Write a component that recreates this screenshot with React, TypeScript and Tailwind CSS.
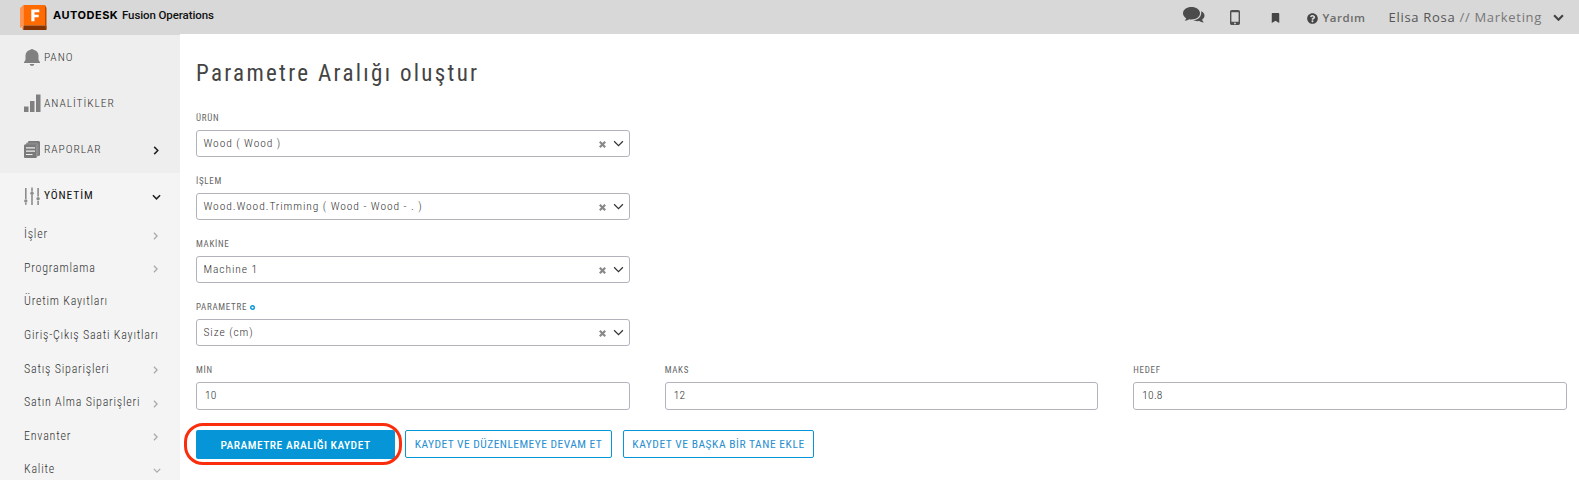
import type { ReactNode } from "react";
import { FaBookmark, FaQuestionCircle } from "react-icons/fa";

const FONT = "font-['Roboto',sans-serif] [font-stretch:75%]";

function Chevron({ className, dir, stroke = 1.7 }: { className: string; dir: "right" | "down"; stroke?: number }) {
  return dir === "right" ? (
    <svg viewBox="0 0 6 10" className={className} fill="none" stroke="currentColor" strokeWidth={stroke}>
      <path d="M1 1l4 4-4 4" />
    </svg>
  ) : (
    <svg viewBox="0 0 10 6" className={className} fill="none" stroke="currentColor" strokeWidth={stroke}>
      <path d="M1 1l4 4 4-4" />
    </svg>
  );
}

function Logo() {
  return (
    <svg viewBox="0 0 27 25" className="h-[25px] w-[27px]">
      <path d="M0 3l3.500-3v20.500l-3 2.500L0 22z" fill="#ff9350" />
      <path d="M3.500 0H25v20.500H3.500z" fill="#ff6b00" />
      <path d="M3.500 20.500H25L26.500 21v4H3L2.500 23z" fill="#843300" />
      <path d="M25 0l1.500 3v21L25 21z" fill="#b84a00" />
      <path d="M2.500 20.800l1-.8V25L2.500 24z" fill="#ff9350" />
      <path d="M11.300 4.500h8v2.700h-4.800v2.600h4.200v2.500h-4.200v4h-3.200z" fill="#fff" />
    </svg>
  );
}

function BellIcon() {
  return (
    <svg viewBox="0 0 16 17" className="h-[17px] w-4" fill="#808080">
      <path d="M8 0c.8 0 1.300.4 1.500.8 3 .6 5 2.700 5 5.700V10c0 1.200.5 2 1.500 3.200v.9H0v-.9C1 12 1.500 11.200 1.500 10V6.500c0-3 2-5.100 5-5.700C6.700.4 7.200 0 8 0z" />
      <path d="M5.700 15h4.600c-.3 1.200-1.200 1.900-2.300 1.900S6 16.200 5.700 15z" />
    </svg>
  );
}

function BarsIcon() {
  return (
    <svg viewBox="0 0 17 18" className="h-[18px] w-[17px]" fill="#808080">
      <path d="M0 12.500h4.500V18H0zM6 7h4.500v11H6zM12 .5h4.500V18H12z" />
    </svg>
  );
}

function ReportsIcon() {
  return (
    <svg viewBox="0 0 16 17" className="h-[17px] w-4">
      <path d="M4.500 0H15l1 1v13.500l-2.500.5V3H3.200z" fill="#7a7a7a" />
      <path d="M2.500 1.800H13l1.500 1.200v12l-1.500.5V4H1.500z" fill="#8c8c8c" />
      <rect y="3.500" width="12.800" height="13.500" rx="1" fill="#7a7a7a" />
      <path d="M2 6.800h9M2 10.200h9M2 13.500h6.500" stroke="#eee" strokeWidth="1.200" />
    </svg>
  );
}

function SlidersIcon() {
  return (
    <svg viewBox="0 0 16 18" className="h-[18px] w-4" fill="#8c8c8c">
      <path d="M1 1h1.600v11H1zM1 16h1.600v1.800H1zM7.200.5h1.600v4H7.200zM7.200 8h1.600v10H7.200zM13.300 1h1.600v8.500h-1.600zM13.300 14h1.600v4h-1.600z" />
      <circle cx="1.800" cy="14" r="1.700" />
      <circle cx="8" cy="6.200" r="1.700" />
      <circle cx="14.100" cy="11.800" r="1.700" />
    </svg>
  );
}

function ChatIcon() {
  return (
    <svg viewBox="0 0 22 17" className="h-[17px] w-[22px]" fill="#4c4c4c">
      <path d="M8.500 0C13.200 0 17 2.700 17 6.200s-3.800 6.200-8.500 6.200c-.8 0-1.500-.1-2.200-.2-1.200.9-2.700 1.400-4.600 1.500.7-.7 1.300-1.500 1.500-2.500C1.200 10 0 8.200 0 6.200 0 2.700 3.800 0 8.500 0z" />
      <path d="M18.200 4.300c2 .9 3.300 2.500 3.300 4.300 0 1.600-.9 3-2.400 4 .3 1 .8 2 1.700 2.900-1.900-.1-3.400-.6-4.500-1.500-2.300.4-4.600 0-6.200-.9 5 0 8.700-3.300 8.100-8.800z" />
    </svg>
  );
}

function PhoneIcon() {
  return (
    <svg viewBox="0 0 10 15" className="h-[15px] w-2.5">
      <path
        fillRule="evenodd"
        d="M1.800 0h6.400C9.200 0 10 .8 10 1.800v11.400c0 1-.8 1.800-1.800 1.800H1.800C.8 15 0 14.200 0 13.200V1.800C0 .8.800 0 1.800 0zM1.400 2.200v9.600h7.200V2.200zM5 12.500a.9.9 0 100 1.800.9.9 0 000-1.800z"
        fill="#505050"
      />
    </svg>
  );
}

function Header() {
  return (
    <header className="flex h-[35px] items-start bg-[#d8d8d8] pl-5">
      <div className="mt-[5px]">
        <Logo />
      </div>
      <div className="mt-[8px] ml-[6px] w-[65px] font-['Inter',sans-serif] text-[11px] leading-[15px] font-bold tracking-[0.5px] text-black">
        AUTODESK
      </div>
      <div className="mt-[7px] ml-1 font-['Roboto',sans-serif] text-[11.5px] leading-4 font-medium tracking-[-0.1px] text-[#111] [font-stretch:100%]">
        Fusion Operations
      </div>
      <div className="ml-auto flex h-[35px] w-[396px] items-start font-['Open_Sans',sans-serif] text-[#555] [font-stretch:100%]">
        <div className="mt-[7px] w-[47px]">
          <ChatIcon />
        </div>
        <div className="mt-[10px] w-[38px]">
          <PhoneIcon />
        </div>
        <FaBookmark className="mt-[13px] mr-[26px] ml-[2px] h-[10px] w-[11px] text-[#444]" />
        <FaQuestionCircle className="mt-[12.500px] h-[11px] w-[11px] text-[#444]" />
        <span className="mt-[9px] ml-[4.500px] w-[66px] text-[11.5px] leading-[18px] font-semibold tracking-[0.55px] text-[#6c6c6c]">
          Yardım
        </span>
        <span className="mt-[8px] w-[164px] text-[13px] leading-[19px] font-medium tracking-[0.7px] whitespace-pre">
          Elisa Rosa <span className="text-[#777]">// Marketing</span>
        </span>
        <Chevron dir="down" stroke={2} className="mt-[14px] h-[7px] w-[11px] text-[#444]" />
      </div>
    </header>
  );
}

function NavRow({ icon, label, chevron }: { icon: ReactNode; label: string; chevron?: boolean }) {
  return (
    <div className="flex h-[46.3px] items-center pr-[21px] pb-[2px] pl-6 text-[11.5px] tracking-[0.95px] text-[#333]">
      <span className="flex w-5 shrink-0">{icon}</span>
      <span className="font-light">{label}</span>
      {chevron && <Chevron dir="right" className="mt-[2px] ml-auto h-[9px] w-[6px] text-[#222]" />}
    </div>
  );
}

const SUBMENU: { label: string; dir?: "right" | "down" }[] = [
  { label: "İşler", dir: "right" },
  { label: "Programlama", dir: "right" },
  { label: "Üretim Kayıtları" },
  { label: "Giriş-Çıkış Saati Kayıtları" },
  { label: "Satış Siparişleri", dir: "right" },
  { label: "Satın Alma Siparişleri", dir: "right" },
  { label: "Envanter", dir: "right" },
  { label: "Kalite", dir: "down" },
];

function Sidebar() {
  return (
    <nav className="h-[445px] w-[180px] shrink-0 overflow-hidden bg-[#f4f4f4]">
      <div className="h-[138px] bg-[#eee]">
        <NavRow icon={<BellIcon />} label="PANO" />
        <NavRow icon={<BarsIcon />} label="ANALİTİKLER" />
        <NavRow icon={<ReportsIcon />} label="RAPORLAR" chevron />
      </div>
      <div className="flex h-[45px] items-center pr-[19px] pl-6 text-[11.5px] tracking-[0.9px] text-[#111]">
        <span className="flex w-5 shrink-0">
          <SlidersIcon />
        </span>
        <span>YÖNETİM</span>
        <Chevron dir="down" className="mt-[3px] ml-auto h-[6px] w-[9px] text-[#222]" />
      </div>
      {SUBMENU.map(({ label, dir }) => (
        <div
          key={label}
          className="flex h-[33.6px] items-center pr-[19px] pl-6 text-[12px] font-light tracking-[0.79px] whitespace-nowrap text-[#333]"
        >
          <span className="w-[129px] shrink-0 pb-[1px]">{label}</span>
          {dir === "right" && <Chevron dir="right" stroke={1.6} className="mt-[2px] h-[8px] w-[5px] text-[#aaa]" />}
          {dir === "down" && <Chevron dir="down" stroke={1.6} className="mt-[2px] h-[5px] w-[8px] text-[#aaa]" />}
        </div>
      ))}
    </nav>
  );
}

function FieldLabel({ children }: { children: ReactNode }) {
  return <div className="flex h-3 items-center text-[9px] leading-3 tracking-[0.7px] text-[#666]">{children}</div>;
}

function SelectField({ label, value, required }: { label: string; value: string; required?: boolean }) {
  return (
    <div className="h-[63px] w-[434px]">
      <FieldLabel>
        {label}
        {required && (
          <svg viewBox="0 0 5 5" className="ml-[3px] h-[5px] w-[5px]">
            <circle cx="2.500" cy="2.500" r="1.800" fill="none" stroke="#0696d7" strokeWidth="1.400" />
          </svg>
        )}
      </FieldLabel>
      <div className="mt-[6px] flex h-[27px] items-center rounded-[3px] border border-[#b3b3bd] pr-[5px] pl-[6.5px] text-[#333]">
        <span className="text-[11.5px] font-light tracking-[0.92px]">{value}</span>
        <svg viewBox="0 0 7 7" className="mt-[2px] ml-auto h-[7px] w-[7px]" stroke="#888" strokeWidth="2.200">
          <path d="M.8.8l5.400 5.400M6.200.8L.8 6.200" />
        </svg>
        <Chevron dir="down" stroke={1.1} className="ml-[7px] h-[7px] w-[11px] text-[#333]" />
      </div>
    </div>
  );
}

function InputField({ label, value }: { label: string; value: string }) {
  return (
    <div>
      <FieldLabel>{label}</FieldLabel>
      <div className="mt-[6px] flex h-[28px] items-center rounded-[3px] border border-[#b3b3bd] pb-[1px] pl-2 text-[11.5px] font-light tracking-[0.2px] text-[#333]">
        {value}
      </div>
    </div>
  );
}

export default function App() {
  return (
    <div className={`h-[480px] overflow-hidden bg-white ${FONT}`}>
      <Header />
      <div className="flex">
        <Sidebar />
        <main className="-mt-px flex-1 bg-white pr-3 pl-4">
          <h1 className="pt-[26px] text-[23px] leading-[28px] tracking-[2.3px] text-[#444]">
            Parametre Aralığı oluştur
          </h1>
          <div className="mt-[24px]">
            <SelectField label="ÜRÜN" value="Wood ( Wood )" />
            <SelectField label="İŞLEM" value="Wood.Wood.Trimming ( Wood - Wood - . )" />
            <SelectField label="MAKİNE" value="Machine 1" />
            <SelectField label="PARAMETRE" value="Size (cm)" required />
          </div>
          <div className="grid grid-cols-3 gap-[35px]">
            <InputField label="MİN" value="10" />
            <InputField label="MAKS" value="12" />
            <InputField label="HEDEF" value="10.8" />
          </div>
          <div className="mt-5 flex items-start text-[11.5px]">
            <div className="relative flex h-[29px] w-[199px] items-center justify-center rounded-[2px] bg-[#0696d7] pt-[2px] font-medium tracking-[0.5px] text-white">
              PARAMETRE ARALIĞI KAYDET
              <span className="absolute -top-[7px] -left-[12px] h-[42px] w-[218px] rounded-[19px] border-[3px] border-[#fa2e0c]" />
            </div>
            <div className="ml-[10px] flex h-7 w-[207px] items-center justify-center rounded-[2px] border border-[#0696d7] pt-px tracking-[0.45px] text-[#2a8fd0]">
              KAYDET VE DÜZENLEMEYE DEVAM ET
            </div>
            <div className="ml-[11px] flex h-7 w-[191px] items-center justify-center rounded-[2px] border border-[#0696d7] pt-px tracking-[0.53px] text-[#2a8fd0]">
              KAYDET VE BAŞKA BİR TANE EKLE
            </div>
          </div>
        </main>
      </div>
    </div>
  );
}
